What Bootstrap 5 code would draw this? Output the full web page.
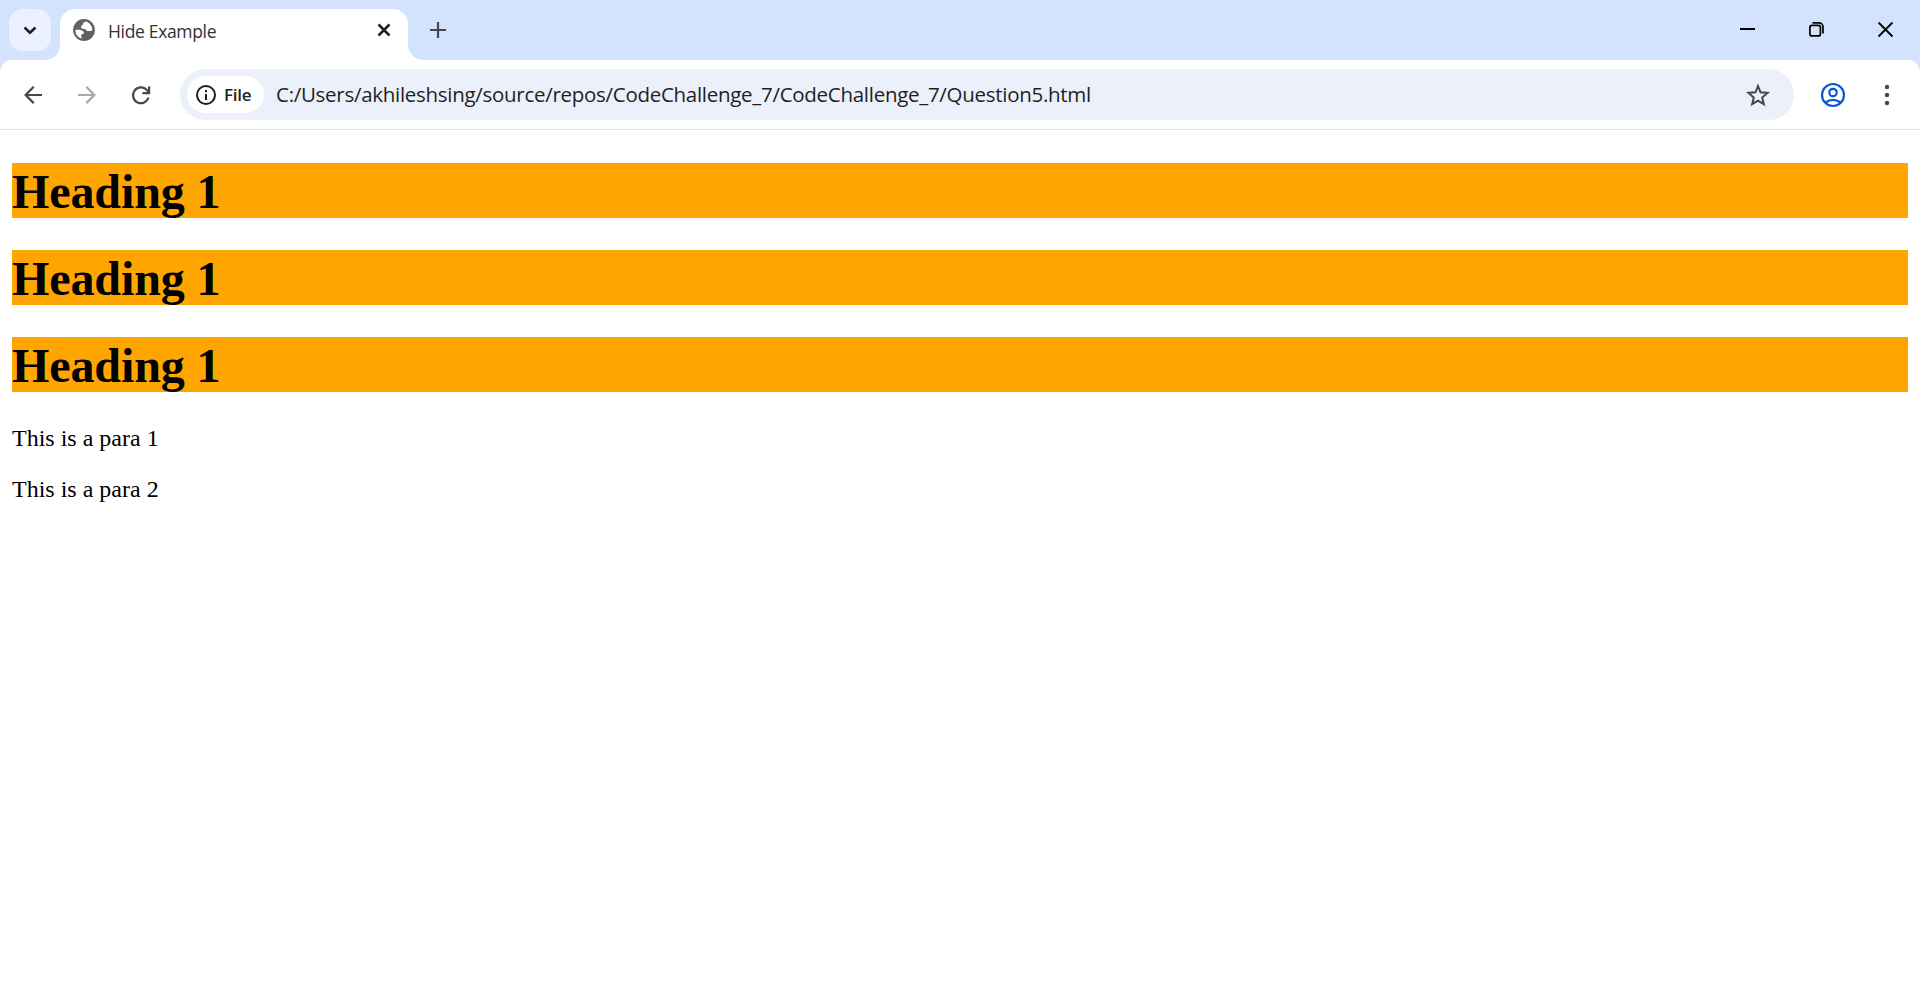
<!DOCTYPE html>
<html lang="en">
<head>
<meta charset="utf-8">
<title>Hide Example</title>
<link href="https://cdn.jsdelivr.net/npm/bootstrap@5.3.0/dist/css/bootstrap.min.css" rel="stylesheet">
<style>
  body { background: #fff; color: #000; overflow: hidden; }
  svg { display: block; flex: none; fill: none; }
  .ui-font { font-family: "Open Sans", "Noto Sans", sans-serif; white-space: nowrap; }
  .tab-strip { height: 60px; background: #d3e3fd; padding: 9px 0 0 9px; }
  .strip-under { background: #d3e3fd; }
  .tab-search { width: 42px; height: 42px; border-radius: 14px; background: #ebf1fe; }
  .tab-active { width: 348px; height: 51px; margin-left: 9px; background: #fff; border-radius: 15px 15px 0 0; padding: 0 16px 9px 13px; }
  .tab-active::before, .tab-active::after { content: ""; position: absolute; bottom: 0; width: 15px; height: 15px; }
  .tab-active::before { left: -15px; background: radial-gradient(circle at 0 0, transparent 14.5px, #fff 15.2px); }
  .tab-active::after { right: -15px; background: radial-gradient(circle at 100% 0, transparent 14.5px, #fff 15.2px); }
  .tab-title { font-size: 17.5px; line-height: 24px; letter-spacing: -.33px; color: #303134; margin: 2px 0 0 13px; }
  .new-tab { margin: 6px 0 0 15px; }
  .win-buttons { gap: 39px; padding: 5px 19px 0 0; }
  .tool-row { height: 69px; background: #fff; border-radius: 12px 12px 0 0; padding: 9px 18px 9px 18px; }
  .nav-icons { gap: 24px; width: 162px; }
  .url-field { width: 1614px; height: 51px; border-radius: 26px; background: #ecf0fa; padding: 0 20px 0 7px; }
  .file-chip { width: 77px; height: 37px; border-radius: 19px; background: #fff; padding-left: 4px; }
  .chip-text { font-size: 17px; line-height: 24px; font-weight: 600; color: #1f1f1f; letter-spacing: -.3px; margin-left: 3px; }
  .url-text { font-size: 20.5px; line-height: 28px; color: #1f1f1f; margin: 0 0 2px 12px; letter-spacing: -.285px; }
  .menu-dots { fill: #474747; margin-left: 24px; }
  .rule-line { height: 2px; border-top: 1px solid #dfe0e1; }
  .doc { font-family: "Liberation Serif", "Times New Roman", serif; font-size: 24px; padding: 32px 12px 0; }
  .doc h1 { font-size: 48px; line-height: 53px; padding-top: 2px; font-weight: 700; background: orange; color: #000; margin: 0 0 32px; letter-spacing: -.1px; }
  .doc p { line-height: 26px; padding-top: 1px; margin: 0 0 24px; }
</style>
</head>
<body>
<header>
  <div class="tab-strip d-flex align-items-start">
    <div class="tab-search d-flex align-items-center justify-content-center">
      <svg width="42" height="42" stroke="#1f1f1f" stroke-width="2.6"><path d="M15.5 18.5l5.5 5.3 5.500-5.300"/></svg>
    </div>
    <div class="tab-active position-relative d-flex align-items-center">
      <svg width="22" height="22" viewBox="0 0 22 22"><circle cx="11" cy="11" r="10.900" fill="#5f6368"/><path fill="#fff" d="M12.300 2.500C11 3.500 9.800 4 9.800 5.300c0 1.500-1.800 1-1.800 2.500 0 1.700 1 2.200 2.700 2.100 2-.1 3 .9 3 2.200h3.300c.9 0 1.500-.8 2.400-.6C19.300 7 16.500 3 12.300 2.500zM2.500 11c2.500-.3 5.300-.2 7.300 1.100 1.700 1 1.500 3-.5 3.200l-1 .2v2c0 .9.600 1.600 1.400 1.800C5.500 19.500 2.300 15.600 2.500 11z"/></svg>
      <span class="tab-title ui-font">Hide Example</span>
      <svg class="ms-auto" width="16" height="16" stroke="#1f1f1f" stroke-width="2.500"><path d="M2.500 2.500l11 11M13.500 2.500l-11 11"/></svg>
    </div>
    <svg class="new-tab" width="30" height="30" stroke="#474747" stroke-width="2.200"><path d="M7 15h16M15 7v16"/></svg>
    <div class="win-buttons ms-auto d-flex">
      <svg width="30" height="30" stroke="#000" stroke-width="2"><path d="M7 15h15"/></svg>
      <svg width="30" height="30" stroke="#000" stroke-width="1.700"><rect x="7.900" y="11.400" width="10.500" height="10.500" rx="2"/><path d="M10.500 8.900h6.500a4 4 0 0 1 4 4v6.500"/></svg>
      <svg width="30" height="30" stroke="#000" stroke-width="1.800"><path d="M7.500 8.500l14 14M21.500 8.500l-14 14"/></svg>
    </div>
  </div>
  <div class="strip-under">
    <div class="tool-row d-flex align-items-center">
      <div class="nav-icons d-flex">
        <svg width="30" height="30" stroke="#474747" stroke-width="2.200"><path d="M24 15H8M15.700 6.800L7.600 15l8.100 8.100"/></svg>
        <svg width="30" height="30" stroke="#a9a9a9" stroke-width="2.200"><path d="M6 15h16M14.300 6.800l8.100 8.200-8.100 8.100"/></svg>
        <svg width="30" height="30" stroke="#474747" stroke-width="2.200"><path d="M22.500 17.500A7.900 7.900 0 1 1 20.300 9.500L23 12.200M23.100 6.500v6.600h-6.700"/></svg>
      </div>
      <div class="url-field d-flex align-items-center">
        <div class="file-chip d-flex align-items-center">
          <svg width="30" height="30" stroke="#1f1f1f" stroke-width="2"><circle cx="15" cy="15" r="9"/><path d="M15 14v6M15 10v2.200"/></svg>
          <span class="chip-text ui-font">File</span>
        </div>
        <span class="url-text ui-font">C:/Users/akhileshsing/source/repos/CodeChallenge_7/CodeChallenge_7/Question5.html</span>
        <svg class="ms-auto" width="30" height="30" stroke="#474747" stroke-width="2"><path d="M14 6l2.500 6.300 7.100.6-5.400 4.600 1.600 6.700-5.800-3.600-5.800 3.600 1.600-6.700-5.400-4.600 7.100-.6z"/></svg>
      </div>
      <svg class="ms-auto" width="30" height="30" stroke="#0b57d0" stroke-width="2.200"><circle cx="15" cy="15" r="11"/><circle cx="15" cy="12.500" r="3.700"/><path d="M7.500 22.500q7.500-5.300 15 0"/></svg>
      <svg class="menu-dots" width="30" height="30"><circle cx="15" cy="7" r="2.200"/><circle cx="15" cy="15" r="2.200"/><circle cx="15" cy="23" r="2.200"/></svg>
    </div>
  </div>
  <div class="rule-line"></div>
</header>
<main class="doc">
  <h1>Heading 1</h1>
  <h1>Heading 1</h1>
  <h1>Heading 1</h1>
  <p>This is a para 1</p>
  <p>This is a para 2</p>
</main>
<script src="https://cdn.jsdelivr.net/npm/bootstrap@5.3.0/dist/js/bootstrap.bundle.min.js"></script>
</body>
</html>
